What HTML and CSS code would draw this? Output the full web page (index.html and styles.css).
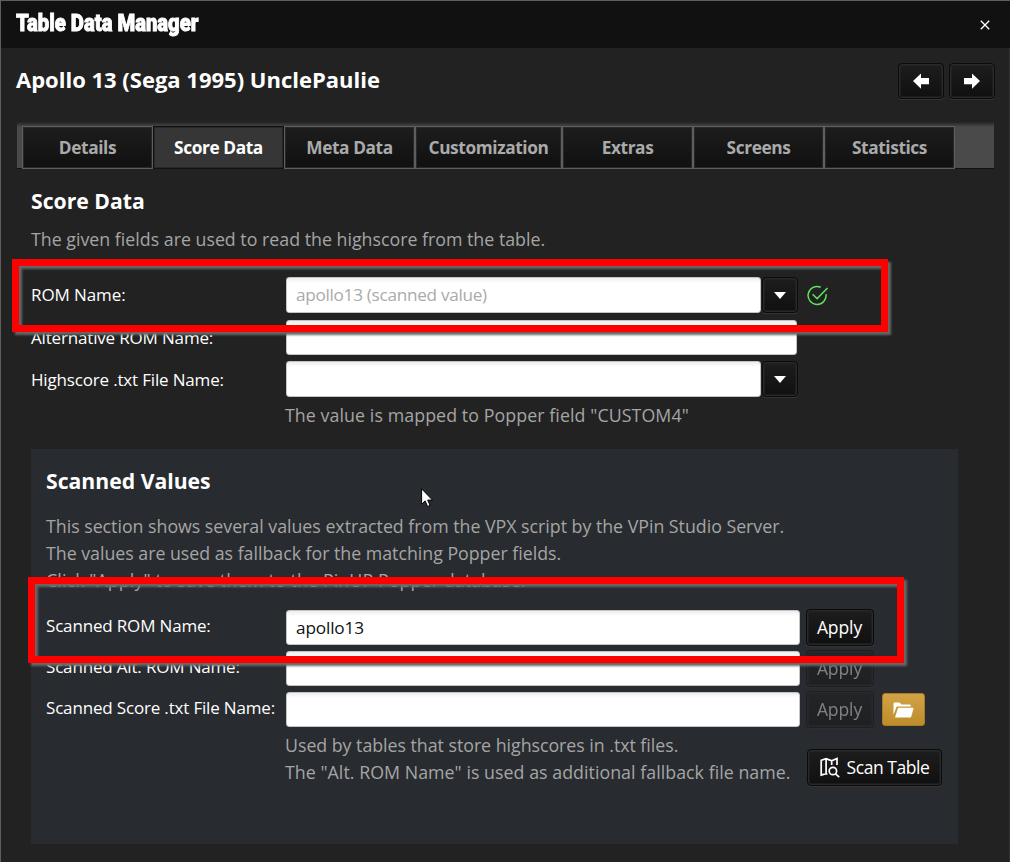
FILE: index.html
```html
<!DOCTYPE html>
<html lang="en">
<head>
<meta charset="utf-8">
<title>Table Data Manager</title>
<link rel="stylesheet" href="styles.css">
</head>
<body>
<div class="window">
  <header class="titlebar">
    <span class="app-title">Table Data Manager</span>
    <svg class="close" viewBox="0 0 10 10"><path d="M.8.8l8.4 8.4M9.2.8L.8 9.2"/></svg>
  </header>
  <div class="heading-row">
    <h1 class="table-name">Apollo 13 (Sega 1995) UnclePaulie</h1>
    <div class="nav">
      <button class="btn nav-btn"><svg width="16" height="16" viewBox="0 0 16 16"><path fill="#fff" d="M0 8L8 .5V5h8v6.2H8v4.5z"/></svg></button>
      <button class="btn nav-btn"><svg width="16" height="16" viewBox="0 0 16 16"><path fill="#fff" d="M16 8L8 .5V5H0v6.2h8v4.5z"/></svg></button>
    </div>
  </div>
  <nav class="tabs">
    <span class="tab">Details</span>
    <span class="tab active">Score Data</span>
    <span class="tab">Meta Data</span>
    <span class="tab wide">Customization</span>
    <span class="tab">Extras</span>
    <span class="tab">Screens</span>
    <span class="tab">Statistics</span>
  </nav>
  <main class="content">
    <h2 class="section-title">Score Data</h2>
    <p class="hint intro">The given fields are used to read the highscore from the table.</p>
    <div class="form">
      <div class="row row-tall">
        <label class="label label-rom">ROM Name:</label>
        <div class="combo"><div class="input placeholder">apollo13 (scanned value)</div><div class="btn arrow"><i class="caret"></i></div></div>
        <svg class="check" width="22" height="22" viewBox="0 0 22 22"><path d="M13.7 2.2A9 9 0 1 0 19 9.2M5.6 9.2l4.5 4.4L20.5 3"/></svg>
      </div>
      <div class="row row-alt">
        <label class="label">Alternative ROM Name:</label>
        <div class="input full"></div>
      </div>
      <div class="row row-tall">
        <label class="label">Highscore .txt File Name:</label>
        <div class="combo"><div class="input"></div><div class="btn arrow"><i class="caret"></i></div></div>
      </div>
    </div>
    <p class="hint mapped">The value is mapped to Popper field "CUSTOM4"</p>
    <section class="panel">
      <h2 class="panel-title">Scanned Values</h2>
      <p class="hint panel-text">This section shows several values extracted from the VPX script by the VPin Studio Server.<br>The values are used as fallback for the matching Popper fields.<br><span class="panel-last">Click "Apply" to save them to the PinUP Popper database.</span></p>
      <div class="scan-form">
        <div class="scan-row">
          <label class="label">Scanned ROM Name:</label>
          <div class="input scan-input">apollo13</div>
          <button class="btn apply">Apply</button>
        </div>
        <div class="scan-row">
          <label class="label">Scanned Alt. ROM Name:</label>
          <div class="input scan-input"></div>
          <button class="btn apply disabled">Apply</button>
        </div>
        <div class="scan-row">
          <label class="label">Scanned Score .txt File Name:</label>
          <div class="input scan-input"></div>
          <button class="btn apply disabled">Apply</button>
          <button class="folder"><svg width="21" height="16" viewBox="0 0 21 16"><path fill="#fff" d="M.5 13V1.5Q.5.5 1.5.5h5L8.6 2.5h8q1.2 0 1.2 1.2v.8H4.6q-1 0-1.4 1zM2 15.5L4.9 6.3q.2-.6.9-.6h14.1q.8 0 .6.8L18.3 14.6q-.3.9-1.2.9z"/></svg></button>
        </div>
      </div>
      <div class="footer">
        <p class="hint footer-text"><span class="footer-first">Used by tables that store highscores in .txt files.</span><br>The "Alt. ROM Name" is used as additional fallback file name.</p>
        <button class="btn scan-btn"><svg width="20" height="21" viewBox="0 0 20 21"><path d="M7.5 17.2L6.1 16.6 1.2 18V3.3L6.1 1.6l5.6 2.2L17 1.5V8M6.1 1.6v15M11.7 3.8V8"/><circle cx="12.9" cy="14" r="3.7"/><path d="M15.6 16.8l3.6 3.4"/></svg><span>Scan Table</span></button>
      </div>
    </section>
  </main>
  <div class="mark mark-top"></div>
  <div class="mark mark-bottom"></div>
  <svg class="cursor" width="13" height="20" viewBox="0 0 13 20"><path d="M.6.8v15.4l3.5-3.3 2.5 5.6 2.5-1.1-2.4-5.3h4.8z"/></svg>
</div>
</body>
</html>
```

FILE: styles.css
```css
* { box-sizing: border-box; }
body { margin: 0; background: #222; overflow: hidden; }
h1, h2, p { margin: 0; }
button { font: inherit; padding: 0; }

.window {
  position: relative;
  width: 1010px;
  height: 862px;
  background: #222;
  border: solid #5e5e5e;
  border-width: 1px 0 0 1px;
  box-shadow: inset -1px 0 #303030;
  font-family: "Open Sans", "Noto Sans", sans-serif;
  font-size: 17px;
  color: #fff;
  white-space: nowrap;
}

.titlebar {
  height: 47px;
  padding: 0 20.5px 0 15px;
  background: #111;
  display: flex;
  justify-content: space-between;
  align-items: center;
}
.app-title {
  font: 900 24px/45px Roboto, sans-serif;
  height: 47px;
  -webkit-text-stroke: .9px #fff;
  transform: scaleX(.843);
  transform-origin: 0 50%;
}
.close { width: 10px; height: 10px; stroke: #fff; stroke-width: 1.3; fill: none; }

.heading-row {
  height: 74px;
  padding: 15px 15px 0 15px;
  display: flex;
  justify-content: space-between;
}
.table-name { font-size: 22px; line-height: 32px; font-weight: 700; }
.nav { display: flex; gap: 5px; }

.btn {
  display: flex;
  align-items: center;
  justify-content: center;
  border: 1px solid #0b0b0b;
  border-radius: 4px;
  background: linear-gradient(#1d1d1d, #101010);
  box-shadow: inset 0 0 0 1.5px #292929, 0 1px 1px #363636;
  color: #fff;
}
.nav-btn { width: 46px; height: 36px; }

.tabs {
  height: 47px;
  margin: 0 16px 0 16px;
  padding: 4px 0 0 5px;
  display: flex;
  background: linear-gradient(#242424, #4a4a4a 5px);
  border-bottom: 1px solid #111;
}
.tab {
  width: 131px;
  height: 43px;
  border: 1px solid #5e5e5e;
  background: linear-gradient(#1d1d1d, #101010);
  box-shadow: inset 0 0 0 1px #282828;
  color: #aaa;
  font-weight: 700;
  font-size: 17.3px;
  letter-spacing: -.4px;
  line-height: 42px;
  text-align: center;
}
.tab.wide { width: 147px; }
.tab.active { background: #363636; border-color: #111; color: #fff; }

.content { padding: 16px 0 0 30px; }
.section-title, .panel-title { font-size: 21.2px; line-height: 32px; font-weight: 700; }
.hint { color: #a5a5a5; font-size: 17.8px; line-height: 27px; }
.intro { margin-top: 9px; }

.form { margin-top: 24px; display: flex; flex-direction: column; gap: 7px; }
.row { display: flex; align-items: center; height: 35px; }
.row-tall { height: 36px; }
.row + .row-tall { margin-top: -1px; }
.label { width: 255px; font-size: 17px; letter-spacing: -.17px; }
.label-rom { padding-bottom: 2px; letter-spacing: -.1px; }
.input {
  height: 100%;
  background: linear-gradient(#ededed, #fff 5px);
  border: 1px solid #c4c4c4;
  border-radius: 3px;
  color: #111;
  padding-left: 9px;
  font-size: 17.2px;
  letter-spacing: -.15px;
  line-height: 34px;
}
.placeholder { color: #aaa; letter-spacing: -.3px; }
.combo { width: 512px; height: 100%; display: flex; }
.combo .input { width: 475px; }
.full { width: 511px; }
.arrow { width: 36px; margin-left: 1px; }
.caret { border: solid transparent; border-width: 7px 6.5px 0; border-top-color: #fff; }
.check { margin: 1px 0 0 9px; fill: none; stroke: #5de35d; stroke-width: 1.5; }
.mapped { margin: 5px 0 0 254px; letter-spacing: .08px; }

.panel {
  width: 927px;
  height: 395px;
  margin-top: 20px;
  padding: 16px 15px 0;
  background: #282b2f;
}
.panel-text { margin-top: 16px; letter-spacing: -.02px; }
.panel-last { letter-spacing: .11px; }
.scan-form { margin-top: 16px; display: flex; flex-direction: column; gap: 6px; }
.scan-row { height: 35px; display: flex; align-items: center; }
.scan-row .label { width: 240px; margin-top: -4px; }
.scan-input { width: 514px; }
.apply { width: 68px; height: 37px; margin-left: 5.5px; font-size: 17.5px; letter-spacing: -.1px; line-height: 34px; padding-bottom: 1px; }
.disabled { opacity: .4; }
.folder {
  width: 43px;
  height: 33px;
  margin-left: 8.5px;
  border: 1px solid #a87a24;
  border-radius: 3px;
  background: linear-gradient(#d2a244, #bd8c2d);
  display: grid;
  place-items: center;
}
.footer { display: flex; margin: 5px 0 0 239px; }
.footer-text { width: 522px; letter-spacing: .04px; }
.footer-first { letter-spacing: -.03px; }
.scan-btn { width: 135px; height: 37px; margin-top: 17px; gap: 7px; font-size: 17.5px; letter-spacing: -.45px; padding-bottom: 1px; }
.scan-btn svg { fill: none; stroke: #fff; stroke-width: 1.7; }

.mark {
  position: absolute;
  border: 7px solid #f00;
  filter: drop-shadow(3px 3px 1px #666);
}
.mark-top { left: 11px; top: 258px; width: 876px; height: 73px; }
.mark-bottom { left: 27px; top: 576px; width: 876px; height: 86px; }
.cursor { position: absolute; left: 420px; top: 487px; fill: #fff; stroke: #000; stroke-width: 1; }
```
